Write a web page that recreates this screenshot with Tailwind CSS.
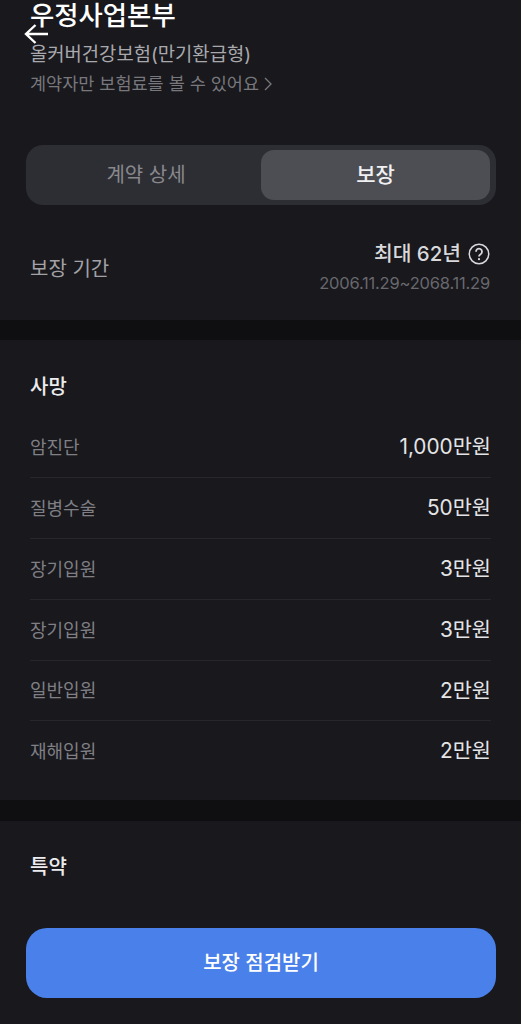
<!DOCTYPE html>
<html lang="ko">
<head>
    <meta charset="UTF-8">
    <meta name="viewport" content="width=device-width, initial-scale=1.0">
    <title>보장</title>
    <script src="https://cdn.jsdelivr.net/npm/@tailwindcss/browser@4"></script>
</head>
<body class="bg-[#18181d] font-['Inter','Noto_Sans_CJK_KR',sans-serif]">
<div class="relative w-[521px] h-[1024px] overflow-hidden bg-[#18181d]">

    <!-- top -->
    <section class="h-[320px] pl-[26px] pr-[25px]">
        <div class="relative h-[145px] px-[4px]">
            <h1 class="h-[29px] pt-[1px] text-[26.400px] leading-[29px] font-medium text-white">우정사업본부</h1>
            <svg class="absolute left-[-2px] top-[23px] w-[26px] h-[22px] text-white" viewBox="0 0 26 22" fill="none" stroke="currentColor" stroke-width="2.4">
                <path d="M24 11H2M11.500 2L2 11l9.500 9"/>
            </svg>
            <p class="mt-[13px] h-[26px] text-[18.800px] leading-[26px] text-[#a9a9ad]">올커버건강보험(만기환급형)</p>
            <p class="mt-[3px] flex items-center gap-[5px] text-[17.500px] leading-[26px] text-[#77777c]">계약자만 보험료를 볼 수 있어요
                <svg class="w-[8px] h-[14px]" viewBox="0 0 8 14" fill="none" stroke="currentColor" stroke-width="1.300"><path d="M1 1l6 6-6 6"/></svg>
            </p>
        </div>

        <div class="flex h-[60px] rounded-[17px] bg-[#2d2e33] pl-[5px] pr-[6px] py-[5px]">
            <div class="flex-1 flex items-center justify-center text-[20px] text-[#88888d]">계약 상세</div>
            <div class="w-[229px] flex items-center justify-center rounded-[13px] bg-[#4d4e54] text-[21px] font-medium text-[#f0f0f2]">보장</div>
        </div>

        <div class="mt-[36px] flex items-center justify-between pl-[4px] pr-[6px]">
            <span class="text-[20px] text-[#a2a2a6]">보장 기간</span>
            <div class="flex flex-col items-end">
                <div class="flex items-center gap-[7px] h-[26px] text-[20.400px] font-medium text-[#d9d9dc]">최대 62년
                    <svg class="w-[22px] h-[22px]" viewBox="0 0 22 22" fill="none" stroke="currentColor" stroke-width="1.500">
                        <circle cx="11" cy="11" r="9.750"/>
                        <path d="M8 8.700a3 3 0 1 1 4.600 2.500c-1 .6-1.600 1.200-1.600 2.300" stroke-width="1.800"/>
                        <circle cx="11" cy="16.200" r="1.100" fill="currentColor" stroke="none"/>
                    </svg>
                </div>
                <span class="mt-[3px] text-[16.500px] leading-[26px] tracking-[-0.2px] text-[#68686d]">2006.11.29~2068.11.29</span>
            </div>
        </div>
    </section>

    <div class="h-[20px] bg-[#0f0f11]"></div>

    <!-- 사망 -->
    <section class="h-[460px] px-[30px]">
        <h2 class="pt-[33px] h-[77px] text-[20px] leading-[28px] font-medium text-[#ececee]">사망</h2>
        <ul>
            <li class="h-[61px] flex items-center justify-between border-b border-[#26262b]"><span class="text-[18px] text-[#7f7f84]">암진단</span><span class="text-[20.800px] text-[#e4e4e6]">1,000만원</span></li>
            <li class="h-[61px] flex items-center justify-between border-b border-[#26262b]"><span class="text-[18px] text-[#7f7f84]">질병수술</span><span class="text-[20.800px] text-[#e4e4e6]">50만원</span></li>
            <li class="h-[61px] flex items-center justify-between border-b border-[#26262b]"><span class="text-[18px] text-[#7f7f84]">장기입원</span><span class="text-[20.800px] text-[#e4e4e6]">3만원</span></li>
            <li class="h-[61px] flex items-center justify-between border-b border-[#26262b]"><span class="text-[18px] text-[#7f7f84]">장기입원</span><span class="text-[20.800px] text-[#e4e4e6]">3만원</span></li>
            <li class="h-[60px] flex items-center justify-between border-b border-[#26262b]"><span class="text-[18px] text-[#7f7f84]">일반입원</span><span class="text-[20.800px] text-[#e4e4e6]">2만원</span></li>
            <li class="h-[60px] flex items-center justify-between"><span class="text-[18px] text-[#7f7f84]">재해입원</span><span class="text-[20.800px] text-[#e4e4e6]">2만원</span></li>
        </ul>
    </section>

    <div class="h-[21px] bg-[#0f0f11]"></div>

    <!-- 특약 -->
    <section class="px-[30px] pt-[32px]">
        <h2 class="text-[20px] leading-[28px] font-medium text-[#ececee]">특약</h2>
    </section>

    <button class="absolute left-[26px] top-[928px] w-[470px] h-[70px] rounded-[21px] bg-[#4a80ea] text-[20px] font-medium text-white">보장 점검받기</button>
</div>
</body>
</html>
